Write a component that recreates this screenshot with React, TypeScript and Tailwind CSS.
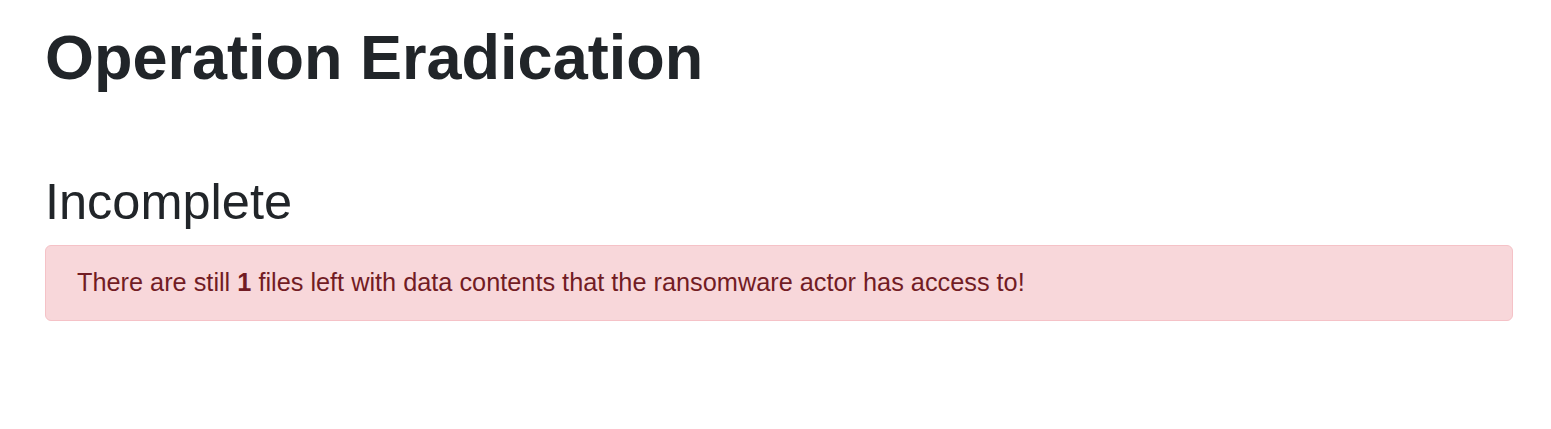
export default function App() {
  return (
    <div className="min-h-screen bg-white pl-[45px] pr-[38px] pt-[20px] text-[#212529]" style={{ fontFamily: '"Liberation Sans", Arial, sans-serif' }}>
      <h1 className="text-[63px] font-bold leading-[1.2]">Operation Eradication</h1>
      <h2 className="mt-[76px] text-[50.5px] font-normal leading-[1.2]">Incomplete</h2>
      <div className="mt-[13px] rounded-[6px] border border-[#f5c2c7] bg-[#f8d7da] px-[31px] pt-[18px] pb-[20px] text-[25.3px] leading-[36px] text-[#721c24]">
        There are still <b>1</b> files left with data contents that the ransomware actor has access to!
      </div>
    </div>
  );
}
